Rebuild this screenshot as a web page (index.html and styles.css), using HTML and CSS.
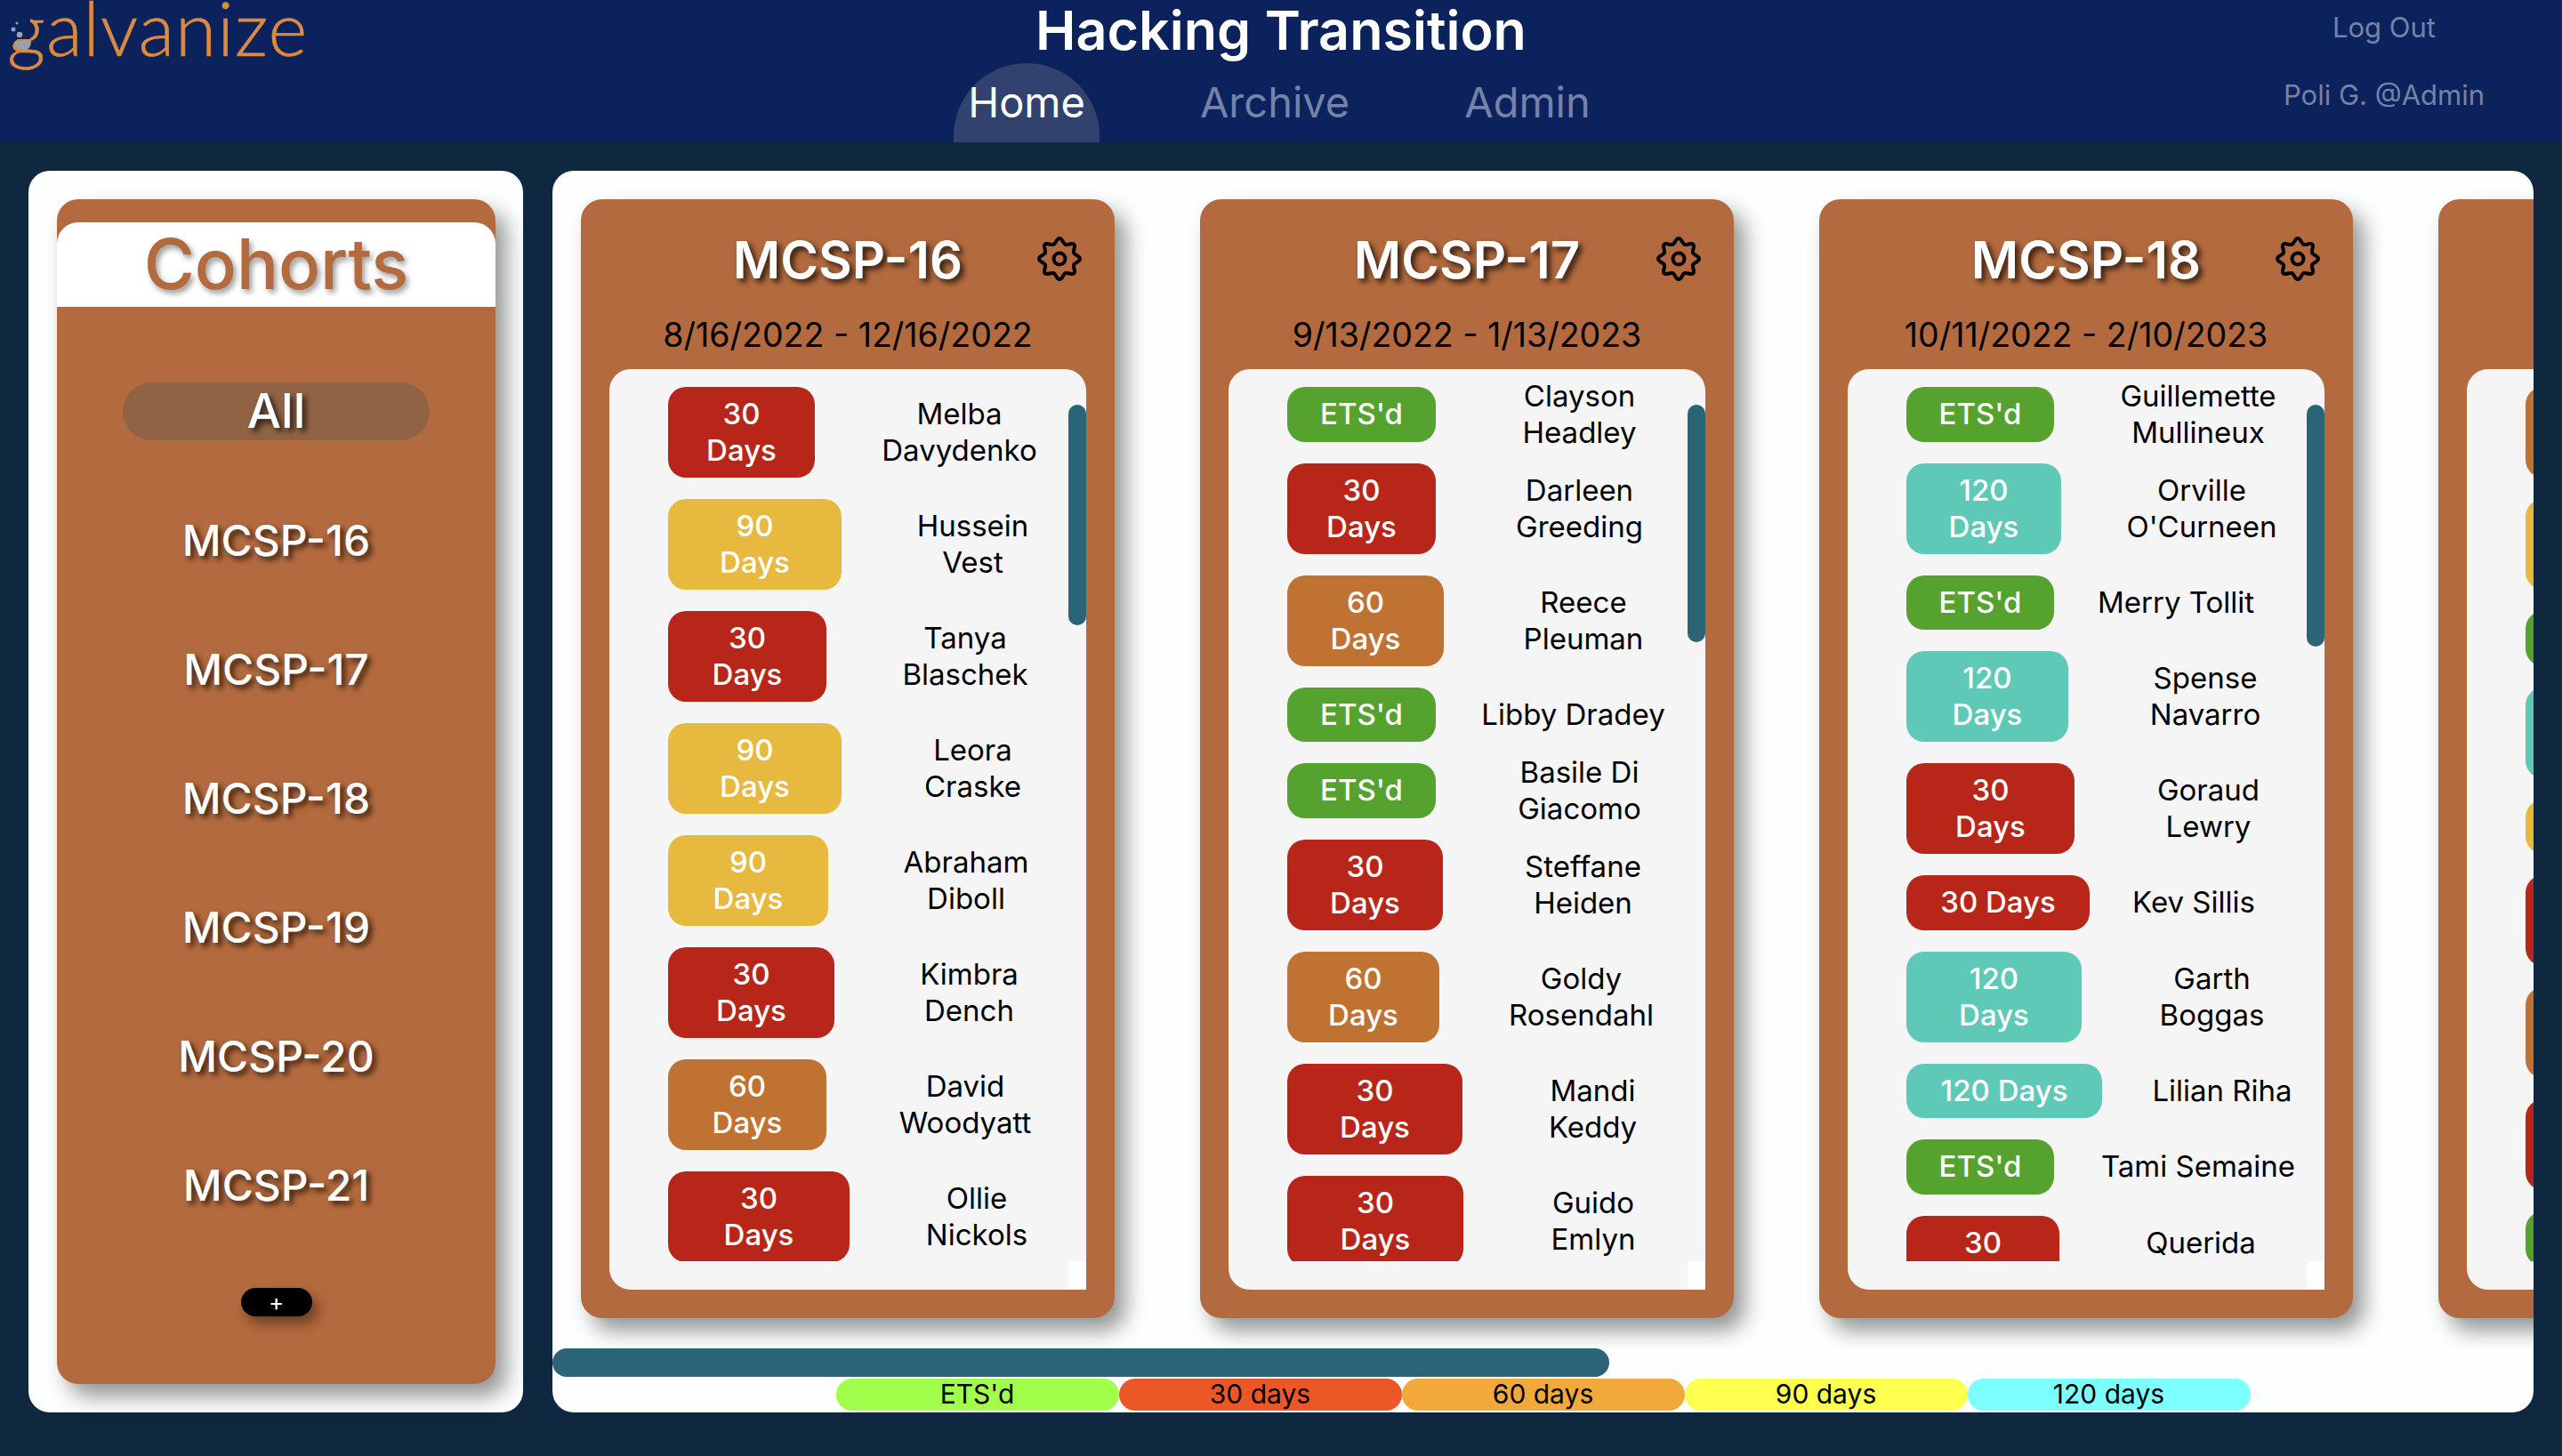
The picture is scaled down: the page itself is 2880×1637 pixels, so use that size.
FILE: index.html
```html
<!DOCTYPE html>
<html lang="en">
<head>
<meta charset="UTF-8">
<meta name="viewport" content="width=device-width, initial-scale=1.0">
<title>Hacking Transition</title>
<link rel="stylesheet" href="styles.css">
</head>
<body>
<header class="topbar">
    <div class="logo">
        <span class="logo-text">galvanize</span>
        <svg class="logo-mark" viewBox="0 0 50 70" aria-hidden="true">
            <rect x="4" y="18" width="30" height="26" fill="#0b225c"/>
            <circle cx="19" cy="26" r="1.500" fill="#9aa3ad"/>
            <circle cx="15" cy="33" r="2.500" fill="#9aa3ad"/>
            <circle cx="22" cy="39" r="3.300" fill="#9aa3ad"/>
            <path d="M17 46h18c0 7-3.500 10.500-9 10.500S17 53 17 46z" fill="#9aa3ad"/>
        </svg>
    </div>
    <div class="center">
        <h1 class="title">Hacking Transition</h1>
        <nav class="tabs">
            <a class="tab active">Home</a>
            <a class="tab">Archive</a>
            <a class="tab">Admin</a>
        </nav>
    </div>
    <div class="account">
        <span>Log Out</span>
        <span>Poli G. @Admin</span>
    </div>
</header>

<main class="page">
    <aside class="side">
        <div class="side-card">
            <h2 class="side-title">Cohorts</h2>
            <ul class="cohort-list">
                <li class="selected">All</li>
                <li>MCSP-16</li>
                <li>MCSP-17</li>
                <li>MCSP-18</li>
                <li>MCSP-19</li>
                <li>MCSP-20</li>
                <li>MCSP-21</li>
            </ul>
            <button class="add">+</button>
        </div>
    </aside>

    <section class="panel">
        <div class="board">

            <article class="card">
                <div class="card-head">
                    <h3>MCSP-16</h3>
                    <svg class="gear" viewBox="0 0 50 50"><use href="#gear"/></svg>
                </div>
                <p class="dates">8/16/2022 - 12/16/2022</p>
                <div class="roster">
                    <ul class="rows">
                        <li><span class="badge red w165">30<br>Days</span><span class="name">Melba<br>Davydenko</span></li>
                        <li><span class="badge yellow w195">90<br>Days</span><span class="name">Hussein<br>Vest</span></li>
                        <li><span class="badge red w178">30<br>Days</span><span class="name">Tanya<br>Blaschek</span></li>
                        <li><span class="badge yellow w195">90<br>Days</span><span class="name">Leora<br>Craske</span></li>
                        <li><span class="badge yellow w180">90<br>Days</span><span class="name">Abraham<br>Diboll</span></li>
                        <li><span class="badge red w187">30<br>Days</span><span class="name">Kimbra<br>Dench</span></li>
                        <li><span class="badge orange w178">60<br>Days</span><span class="name">David<br>Woodyatt</span></li>
                        <li><span class="badge red w204">30<br>Days</span><span class="name">Ollie<br>Nickols</span></li>
                    </ul>
                    <i class="thumb t1"></i>
                    <i class="corner"></i>
                </div>
            </article>

            <article class="card">
                <div class="card-head">
                    <h3>MCSP-17</h3>
                    <svg class="gear" viewBox="0 0 50 50"><use href="#gear"/></svg>
                </div>
                <p class="dates">9/13/2022 - 1/13/2023</p>
                <div class="roster">
                    <ul class="rows">
                        <li><span class="badge green w167">ETS'd</span><span class="name">Clayson<br>Headley</span></li>
                        <li><span class="badge red w167">30<br>Days</span><span class="name">Darleen<br>Greeding</span></li>
                        <li><span class="badge orange w176">60<br>Days</span><span class="name">Reece<br>Pleuman</span></li>
                        <li><span class="badge green w167">ETS'd</span><span class="name left-14">Libby Dradey</span></li>
                        <li><span class="badge green w167">ETS'd</span><span class="name">Basile Di<br>Giacomo</span></li>
                        <li><span class="badge red w175">30<br>Days</span><span class="name">Steffane<br>Heiden</span></li>
                        <li><span class="badge orange w171">60<br>Days</span><span class="name">Goldy<br>Rosendahl</span></li>
                        <li><span class="badge red w197">30<br>Days</span><span class="name">Mandi<br>Keddy</span></li>
                        <li><span class="badge red w198">30<br>Days</span><span class="name">Guido<br>Emlyn</span></li>
                    </ul>
                    <i class="thumb t2"></i>
                    <i class="corner"></i>
                </div>
            </article>

            <article class="card">
                <div class="card-head">
                    <h3>MCSP-18</h3>
                    <svg class="gear" viewBox="0 0 50 50"><use href="#gear"/></svg>
                </div>
                <p class="dates">10/11/2022 - 2/10/2023</p>
                <div class="roster">
                    <ul class="rows">
                        <li><span class="badge green w166">ETS'd</span><span class="name">Guillemette<br>Mullineux</span></li>
                        <li><span class="badge teal w174">120<br>Days</span><span class="name">Orville<br>O'Curneen</span></li>
                        <li><span class="badge green w166">ETS'd</span><span class="name left-50">Merry Tollit</span></li>
                        <li><span class="badge teal w182">120<br>Days</span><span class="name">Spense<br>Navarro</span></li>
                        <li><span class="badge red w189">30<br>Days</span><span class="name">Goraud<br>Lewry</span></li>
                        <li><span class="badge red w206">30 Days</span><span class="name left-50">Kev Sillis</span></li>
                        <li><span class="badge teal w197">120<br>Days</span><span class="name">Garth<br>Boggas</span></li>
                        <li><span class="badge teal w220">120 Days</span><span class="name">Lilian Riha</span></li>
                        <li><span class="badge green w166">ETS'd</span><span class="name">Tami Semaine</span></li>
                        <li><span class="badge red w172">30<br>Days</span><span class="name">Querida<br>&nbsp;</span></li>
                    </ul>
                    <i class="thumb t3"></i>
                    <i class="corner"></i>
                </div>
            </article>

            <article class="card">
                <div class="card-head">
                    <h3>MCSP-19</h3>
                    <svg class="gear" viewBox="0 0 50 50"><use href="#gear"/></svg>
                </div>
                <p class="dates">11/8/2022 - 3/8/2023</p>
                <div class="roster">
                    <ul class="rows">
                        <li><span class="badge orange w200"></span></li>
                        <li><span class="badge yellow w200"></span></li>
                        <li class="short"><span class="badge green w200"></span></li>
                        <li><span class="badge teal w200"></span></li>
                        <li class="short"><span class="badge yellow w200"></span></li>
                        <li><span class="badge red w200"></span></li>
                        <li><span class="badge orange w200"></span></li>
                        <li><span class="badge red w200"></span></li>
                        <li class="short"><span class="badge green w200"></span></li>
                    </ul>
                </div>
            </article>
        </div>

        <div class="hscroll"></div>

        <div class="legend">
            <span class="ets">ETS'd</span>
            <span class="d30">30 days</span>
            <span class="d60">60 days</span>
            <span class="d90">90 days</span>
            <span class="d120">120 days</span>
        </div>
    </section>
</main>

<svg class="defs" aria-hidden="true">
    <path id="tooth" d="M16.170 -6.700C17.510 -3.470 23 -3.500 23 0C23 3.500 17.510 3.470 16.170 6.700"/>
    <symbol id="gear" viewBox="-25 -25 50 50">
        <g fill="none" stroke="#000" stroke-width="4" stroke-linecap="round">
            <use href="#tooth"/>
            <use href="#tooth" transform="rotate(45)"/>
            <use href="#tooth" transform="rotate(90)"/>
            <use href="#tooth" transform="rotate(135)"/>
            <use href="#tooth" transform="rotate(180)"/>
            <use href="#tooth" transform="rotate(225)"/>
            <use href="#tooth" transform="rotate(270)"/>
            <use href="#tooth" transform="rotate(315)"/>
            <circle r="6.500"/>
        </g>
    </symbol>
</svg>
</body>
</html>
```

FILE: styles.css
```css
* {
    box-sizing: border-box;
}
body {
    margin: 0;
    background: #0f283f;
    font-family: Inter, "Noto Sans", sans-serif;
    color: #000;
    height: 1637px;
    overflow: hidden;
}
ul {
    margin: 0;
    padding: 0;
    list-style: none;
}
.defs {
    position: absolute;
    width: 0;
    height: 0;
}

/* top bar */
.topbar {
    height: 160px;
    background: #0b225c;
    display: grid;
    grid-template-columns: 1fr auto 1fr;
}
.logo {
    position: relative;
    padding-left: 8px;
}
.logo-text {
    display: block;
    font: 300 84px/61px Lato, sans-serif;
    letter-spacing: 1px;
    color: #db8a3f;
    -webkit-text-stroke: .6px #db8a3f;
}
.logo-mark {
    position: absolute;
    left: 0;
    top: 0;
    width: 50px;
    height: 70px;
}
.center {
    display: flex;
    flex-direction: column;
    align-items: center;
}
.title {
    margin: 0;
    color: #fff;
    font-size: 61px;
    line-height: 69px;
    font-weight: 600;
}
.tabs {
    display: flex;
    gap: 97px;
    margin: 2px 4px 0 0;
}
.tab {
    height: 89px;
    padding: 19px 16px 0;
    font-size: 47px;
    line-height: 50px;
    color: #7583a8;
    border-radius: 82px 82px 0 0;
}
.tab.active {
    background: #31426e;
    color: #fff;
}
.account {
    justify-self: end;
    width: 400px;
    display: flex;
    flex-direction: column;
    align-items: center;
    gap: 36px;
    padding-top: 11px;
    font-size: 31px;
    line-height: 40px;
    color: #7583a8;
}

/* page */
.page {
    display: flex;
    gap: 33px;
    padding: 32px;
    height: 1428px;
}
.side {
    width: 556px;
    height: 1396px;
    flex: none;
    padding: 32px 31px 32px 32px;
    background: #fcfffd;
    border-radius: 24px;
}
.side-card {
    height: 100%;
    padding-top: 26px;
    background: #b36a3e;
    border-radius: 24px;
    box-shadow: 12px 14px 24px rgba(0, 0, 0, .42);
    display: flex;
    flex-direction: column;
    align-items: center;
}
.side-title {
    width: 100%;
    height: 95px;
    margin: 0;
    background: #fff;
    border-radius: 24px 24px 0 0;
    color: #b36a3e;
    font-size: 78px;
    line-height: 93px;
    font-weight: 500;
    text-align: center;
    text-shadow: 3px 4px 6px rgba(0, 0, 0, .4);
}
.cohort-list {
    width: 345px;
    margin-top: 85px;
    display: flex;
    flex-direction: column;
    gap: 80px;
}
.cohort-list li {
    height: 65px;
    border-radius: 33px;
    color: #fff;
    font-size: 48px;
    line-height: 66px;
    font-weight: 500;
    text-align: center;
    text-shadow: 4px 4px 6px rgba(0, 0, 0, .75);
}
.cohort-list .selected {
    background: #916345;
    font-size: 54px;
    line-height: 64px;
}
.add {
    width: 80px;
    height: 32px;
    margin-top: 83px;
    padding: 0;
    border: 0;
    border-radius: 16px;
    background: #000;
    color: #fff;
    font: 26px/30px Inter, sans-serif;
    box-shadow: 6px 8px 14px rgba(0, 0, 0, .4);
}

/* main panel */
.panel {
    flex: 1;
    height: 1396px;
    background: #fcfffd;
    border-radius: 24px;
    overflow: hidden;
}
.board {
    height: 1324px;
    padding: 32px 0 0 32px;
    display: flex;
    gap: 96px;
    overflow: hidden;
}
.card {
    flex: none;
    width: 600px;
    height: 1258px;
    padding: 32px;
    background: #b36a3e;
    border-radius: 24px;
    box-shadow: 12px 14px 24px rgba(0, 0, 0, .42);
}
.card-head {
    height: 68px;
    display: grid;
    grid-template-columns: 1fr auto 1fr;
    align-items: center;
}
.card-head h3 {
    grid-column: 2;
    margin: 0;
    padding-top: 2px;
    color: #fff;
    font-size: 58px;
    line-height: 68px;
    font-weight: 600;
    text-shadow: 4px 4px 6px rgba(0, 0, 0, .75);
}
.gear {
    justify-self: end;
    width: 50px;
    height: 50px;
    margin-right: 5px;
}
.dates {
    margin: 31px 0 16px;
    font-size: 37.500px;
    line-height: 44px;
    text-align: center;
    white-space: nowrap;
}
.roster {
    position: relative;
    height: 1035px;
    background: #f5f5f5;
    border-radius: 24px 24px 0 24px;
    overflow: hidden;
}
.rows {
    height: 1003px;
    padding: 20px 0 0 66px;
    display: flex;
    flex-direction: column;
    gap: 24px;
    overflow: hidden;
}
.rows li {
    flex: none;
    display: flex;
    align-items: center;
    padding-right: 20px;
}
.badge {
    flex: none;
    min-height: 61.500px;
    padding: 10px 0;
    display: flex;
    align-items: center;
    justify-content: center;
    text-align: center;
    border-radius: 20px;
    color: #fff;
    font-size: 33px;
    line-height: 41px;
    font-weight: 500;
}
.name {
    flex: 1;
    margin: -20px 0 -20px 40px;
    text-align: center;
    font-size: 33px;
    line-height: 41px;
    white-space: nowrap;
}
.left-14 { padding-right: 14px; }
.left-50 { padding-right: 50px; }

.red { background: #b82619; }
.yellow { background: #e8b93f; }
.orange { background: #c07232; }
.green { background: #55a22e; }
.teal { background: #5ec9b6; }

.w165 { width: 165px; }
.w166 { width: 166px; }
.w167 { width: 167px; }
.w171 { width: 171px; }
.w172 { width: 172px; }
.w174 { width: 174px; }
.w175 { width: 175px; }
.w176 { width: 176px; }
.w178 { width: 178px; }
.w180 { width: 180px; }
.w182 { width: 182px; }
.w187 { width: 187px; }
.w189 { width: 189px; }
.w195 { width: 195px; }
.w197 { width: 197px; }
.w198 { width: 198px; }
.w200 { width: 200px; height: 102px; }
.w204 { width: 204px; }
.w206 { width: 206px; }
.w220 { width: 220px; }

.short .w200 { height: 61.500px; }

.thumb {
    position: absolute;
    top: 40px;
    right: 0;
    width: 20px;
    border-radius: 10px;
    background: #2b6377;
}
.t1 { height: 248px; }
.t2 { height: 267px; }
.t3 { height: 272px; }
.corner {
    position: absolute;
    right: 0;
    bottom: 0;
    width: 20px;
    height: 32px;
    background: #fcfffd;
}

.hscroll {
    width: 1188px;
    height: 32px;
    border-radius: 16px;
    background: #2b6377;
}
.legend {
    margin-top: 2px;
    display: flex;
    justify-content: center;
}
.legend span {
    width: 318px;
    height: 36px;
    border-radius: 18px;
    font-size: 30px;
    line-height: 34px;
    text-align: center;
}
.ets { background: #a1ff4c; }
.d30 { background: #ec5727; }
.d60 { background: #f3a83b; }
.d90 { background: #ffff50; }
.d120 { background: #7bffff; }
```
